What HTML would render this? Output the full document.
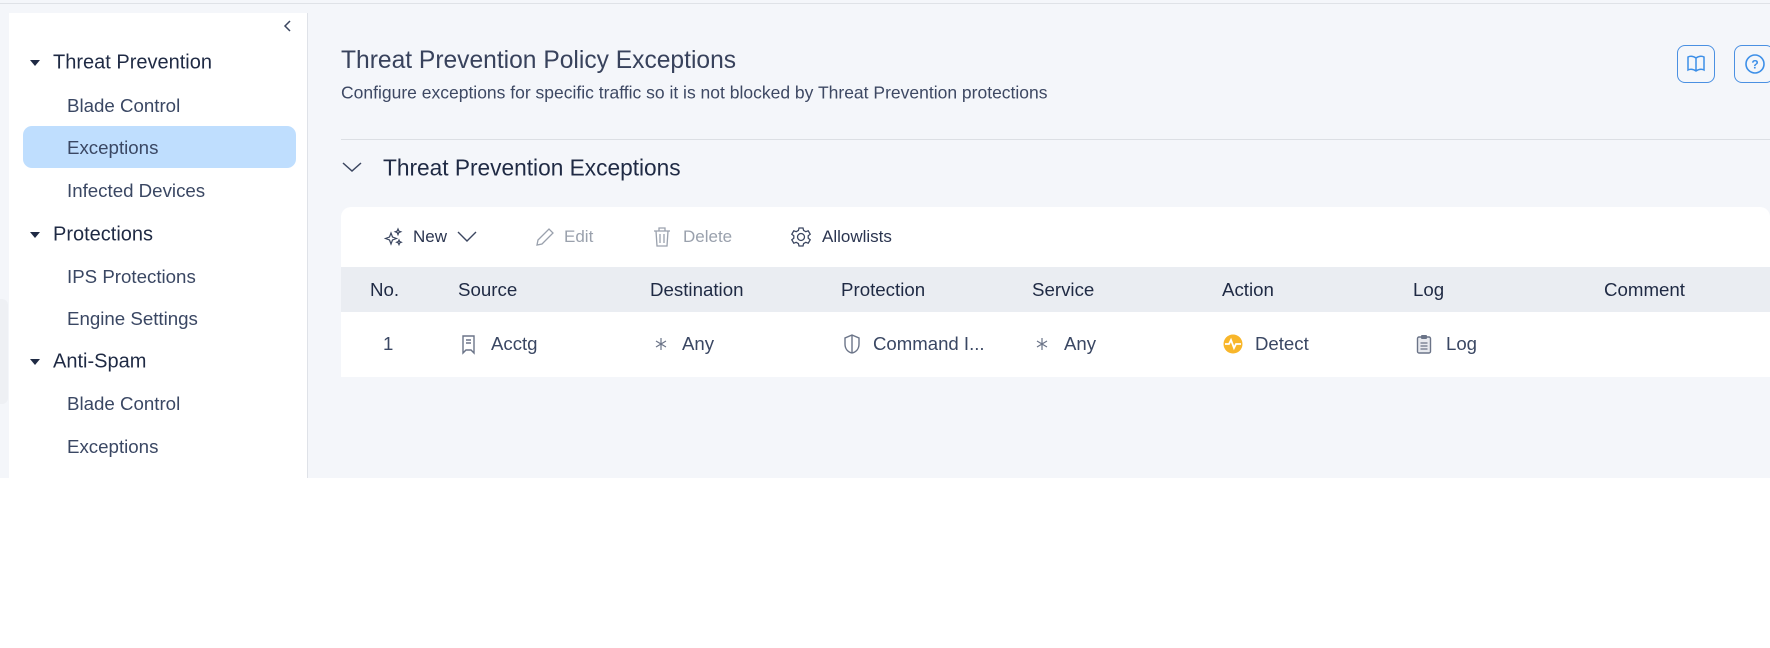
<!DOCTYPE html>
<html><head><meta charset="utf-8"><style>
*{margin:0;padding:0;box-sizing:border-box}
body{width:1770px;height:648px;background:#fff;font-family:"Liberation Sans",sans-serif;position:relative;overflow:hidden;color:#2b3550}
.a{position:absolute;white-space:nowrap}
.t{transform:translateY(-50%)}
</style></head><body>
<div class="a" style="left:0;top:0;width:1770px;height:478px;background:#f4f6fa"></div>
<div class="a" style="left:0;top:3px;width:1770px;height:1px;background:#dfe2e7"></div>
<div class="a" style="left:9px;top:13px;width:299px;height:465px;background:#fff;border-right:1px solid #dfe2e8"></div>
<div class="a" style="left:0;top:299px;width:8px;height:105px;background:#eef0f4;border-radius:0 6px 6px 0"></div>
<svg class="a" style="left:282px;top:19px" width="12" height="14"><path d="M8 2L3 7l5 5" fill="none" stroke="#3b4660" stroke-width="1.5"/></svg>
<div class="a" style="left:23px;top:126px;width:273px;height:42px;background:#bfdefe;border-radius:9px"></div>
<div style="font-size:20px;color:#1f2a44">
<svg class="a" style="left:30px;top:60px" width="11" height="7"><path d="M0 0h10L5 6z" fill="#1f2a44"/></svg>
<div class="a t" style="left:53px;top:63px">Threat Prevention</div>
<svg class="a" style="left:30px;top:232px" width="11" height="7"><path d="M0 0h10L5 6z" fill="#1f2a44"/></svg>
<div class="a t" style="left:53px;top:235px">Protections</div>
<svg class="a" style="left:30px;top:359px" width="11" height="7"><path d="M0 0h10L5 6z" fill="#1f2a44"/></svg>
<div class="a t" style="left:53px;top:362px">Anti-Spam</div>
</div>
<div style="font-size:18.7px;color:#3a4763">
<div class="a t" style="left:67px;top:106px">Blade Control</div>
<div class="a t" style="left:67px;top:148px">Exceptions</div>
<div class="a t" style="left:67px;top:191px">Infected Devices</div>
<div class="a t" style="left:67px;top:277px">IPS Protections</div>
<div class="a t" style="left:67px;top:319px">Engine Settings</div>
<div class="a t" style="left:67px;top:404px">Blade Control</div>
<div class="a t" style="left:67px;top:447px">Exceptions</div>
</div>
<div class="a t" style="left:341px;top:61px;font-size:24.6px;color:#38425c">Threat Prevention Policy Exceptions</div>
<div class="a t" style="left:341px;top:93px;font-size:17.5px;color:#3d4863">Configure exceptions for specific traffic so it is not blocked by Threat Prevention protections</div>
<div class="a" style="left:1677px;top:45px;width:38px;height:38px;border:1.5px solid #4a90e2;border-radius:8px"></div>
<svg class="a" style="left:1686px;top:53px" width="20" height="22"><path d="M10 5C7 3 4 3 2 4v13c2-1 5-1 8 1 3-2 6-2 8-1V4c-2-1-5-1-8 1zM10 5v13" fill="none" stroke="#3d8fe8" stroke-width="1.5"/></svg>
<div class="a" style="left:1734px;top:45px;width:40px;height:38px;border:1.5px solid #4a90e2;border-radius:8px"></div>
<svg class="a" style="left:1744px;top:53px" width="22" height="22"><circle cx="11" cy="11" r="9" fill="none" stroke="#3d8fe8" stroke-width="1.6"/><text x="11" y="15.5" font-size="12" font-weight="bold" text-anchor="middle" fill="#3d8fe8" font-family="Liberation Sans">?</text></svg>
<div class="a" style="left:341px;top:139px;width:1429px;height:1px;background:#dcdfe4"></div>
<svg class="a" style="left:342px;top:161px" width="20" height="12"><path d="M1 2l9 8 9-8" fill="none" stroke="#3b4660" stroke-width="1.5"/></svg>
<div class="a t" style="left:383px;top:168px;font-size:22.7px;color:#1f2a44">Threat Prevention Exceptions</div>
<div class="a" style="left:341px;top:207px;width:1429px;height:170px;background:#fff;border-radius:10px 10px 0 0"></div>
<div class="a" style="left:341px;top:267px;width:1429px;height:45px;background:#eaedf2"></div>
<div style="font-size:17px">
<svg class="a" style="left:383px;top:227px" width="22" height="20"><path d="M8 6l1.5 4 4 1.5-4 1.5L8 17l-1.5-4L2.5 11.5l4-1.5z M15 2l.8 2 2 .8-2 .8-.8 2-.8-2-2-.8 2-.8z M16 13l.7 1.6 1.6.7-1.6.7-.7 1.6-.7-1.6-1.6-.7 1.6-.7z" fill="none" stroke="#3b4660" stroke-width="1.2"/></svg>
<div class="a t" style="left:413px;top:237px;color:#2b3550">New</div>
<svg class="a" style="left:457px;top:231px" width="20" height="12"><path d="M1 1l9 9 9-9" fill="none" stroke="#3b4660" stroke-width="1.4"/></svg>
<svg class="a" style="left:534px;top:226px" width="22" height="22"><path d="M3 19l1-5L15 3l4 4L8 18z" fill="none" stroke="#9aa1ad" stroke-width="1.3"/></svg>
<div class="a t" style="left:564px;top:237px;color:#9aa1ad">Edit</div>
<svg class="a" style="left:652px;top:226px" width="20" height="22"><path d="M2 5h16M7 5V2h6v3M4 5l1 15h10l1-15M8 8v9M12 8v9" fill="none" stroke="#9aa1ad" stroke-width="1.3"/></svg>
<div class="a t" style="left:683px;top:237px;color:#9aa1ad">Delete</div>
<svg class="a" style="left:790px;top:226px" width="22" height="22"><circle cx="11" cy="11" r="3.5" fill="none" stroke="#3b4660" stroke-width="1.3"/><path d="M9 2h4l.6 2.5 2.2 1.2 2.4-.9 2 3.4-2 1.6v2.4l2 1.6-2 3.4-2.4-.9-2.2 1.2L13 20H9l-.6-2.5-2.2-1.2-2.4.9-2-3.4 2-1.6V9.8l-2-1.6 2-3.4 2.4.9 2.2-1.2z" fill="none" stroke="#3b4660" stroke-width="1.3"/></svg>
<div class="a t" style="left:822px;top:237px;color:#2b3550">Allowlists</div>
</div>
<div style="font-size:18.7px;color:#1f2a44">
<div class="a t" style="left:370px;top:290px">No.</div>
<div class="a t" style="left:458px;top:290px">Source</div>
<div class="a t" style="left:650px;top:290px">Destination</div>
<div class="a t" style="left:841px;top:290px">Protection</div>
<div class="a t" style="left:1032px;top:290px">Service</div>
<div class="a t" style="left:1222px;top:290px">Action</div>
<div class="a t" style="left:1413px;top:290px">Log</div>
<div class="a t" style="left:1604px;top:290px">Comment</div>
</div>
<div style="font-size:18.6px;color:#3a4763">
<div class="a t" style="left:383px;top:344px">1</div>
<svg class="a" style="left:461px;top:334px" width="16" height="22"><path d="M2 2h11v17l-3-3H5l-3 3zM5 6h5M5 9h5" fill="none" stroke="#6b7488" stroke-width="1.4"/></svg>
<div class="a t" style="left:491px;top:344px">Acctg</div>
<svg class="a" style="left:654px;top:337px" width="14" height="14"><path d="M7 1v12M2 4l10 6M12 4L2 10" stroke="#6b7488" stroke-width="1.2"/></svg>
<div class="a t" style="left:682px;top:344px">Any</div>
<svg class="a" style="left:843px;top:333px" width="18" height="22"><path d="M9 2l7 3v6c0 5-3 8-7 9-4-1-7-4-7-9V5zM9 2v18" fill="none" stroke="#6b7488" stroke-width="1.4"/></svg>
<div class="a t" style="left:873px;top:344px">Command I...</div>
<svg class="a" style="left:1035px;top:337px" width="14" height="14"><path d="M7 1v12M2 4l10 6M12 4L2 10" stroke="#6b7488" stroke-width="1.2"/></svg>
<div class="a t" style="left:1064px;top:344px">Any</div>
<svg class="a" style="left:1223px;top:334px" width="20" height="20"><circle cx="10" cy="10" r="9.5" fill="#f8b62a"/><path d="M2 10h4l2-4 3 8 2-4h5" fill="none" stroke="#fff" stroke-width="1.8"/></svg>
<div class="a t" style="left:1255px;top:344px">Detect</div>
<svg class="a" style="left:1416px;top:334px" width="16" height="20"><rect x="1.5" y="3" width="13" height="16" rx="1.5" fill="#e8eaef" stroke="#6b7488" stroke-width="1.4"/><rect x="5" y="1" width="6" height="4" rx="1" fill="#6b7488"/><path d="M4.5 9h7M4.5 12h7M4.5 15h7" stroke="#6b7488" stroke-width="1.2"/></svg>
<div class="a t" style="left:1446px;top:344px">Log</div>
</div>
</body></html>
